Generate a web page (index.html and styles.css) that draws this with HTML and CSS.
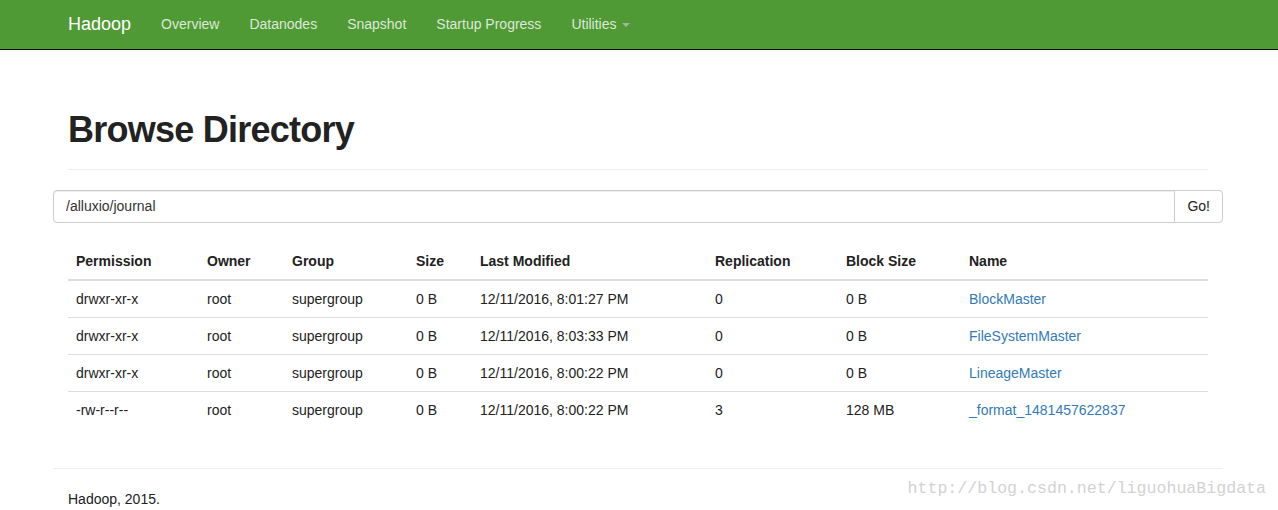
FILE: index.html
```html
<!DOCTYPE html>
<html>
<head>
<meta charset="utf-8">
<title>Browsing HDFS</title>
<link rel="stylesheet" href="styles.css">
</head>
<body>
<header class="navbar">
  <div class="container nav-inner">
    <a class="brand" href="#">Hadoop</a>
    <ul class="nav">
      <li><a href="#">Overview</a></li>
      <li><a href="#">Datanodes</a></li>
      <li><a href="#">Snapshot</a></li>
      <li><a href="#">Startup Progress</a></li>
      <li><a href="#">Utilities <span class="caret"></span></a></li>
    </ul>
  </div>
</header>

<main class="container main">
  <div class="page-header">
    <h1>Browse Directory</h1>
  </div>

  <div class="row">
    <form class="input-group">
      <input class="form-control" type="text" value="/alluxio/journal">
      <button class="btn" type="button">Go!</button>
    </form>
  </div>

  <table class="table">
    <colgroup>
      <col class="c-perm"><col class="c-owner"><col class="c-group"><col class="c-size">
      <col class="c-mod"><col class="c-rep"><col class="c-bsize"><col class="c-name">
    </colgroup>
    <thead>
      <tr>
        <th>Permission</th><th>Owner</th><th>Group</th><th>Size</th>
        <th>Last Modified</th><th>Replication</th><th>Block Size</th><th>Name</th>
      </tr>
    </thead>
    <tbody>
      <tr>
        <td>drwxr-xr-x</td><td>root</td><td>supergroup</td><td>0 B</td>
        <td>12/11/2016, 8:01:27 PM</td><td>0</td><td>0 B</td><td><a href="#">BlockMaster</a></td>
      </tr>
      <tr>
        <td>drwxr-xr-x</td><td>root</td><td>supergroup</td><td>0 B</td>
        <td>12/11/2016, 8:03:33 PM</td><td>0</td><td>0 B</td><td><a href="#">FileSystemMaster</a></td>
      </tr>
      <tr>
        <td>drwxr-xr-x</td><td>root</td><td>supergroup</td><td>0 B</td>
        <td>12/11/2016, 8:00:22 PM</td><td>0</td><td>0 B</td><td><a href="#">LineageMaster</a></td>
      </tr>
      <tr>
        <td>-rw-r--r--</td><td>root</td><td>supergroup</td><td>0 B</td>
        <td>12/11/2016, 8:00:22 PM</td><td>3</td><td>128 MB</td><td><a href="#">_format_1481457622837</a></td>
      </tr>
    </tbody>
  </table>

  <div class="row">
    <hr class="footer-rule">
    <footer class="footer">Hadoop, 2015.</footer>
  </div>
</main>

<div class="watermark">http://blog.csdn.net/liguohuaBigdata</div>
</body>
</html>
```

FILE: styles.css
```css
* { box-sizing: border-box; }

html, body {
  margin: 0;
  padding: 0;
}

body {
  font-family: "Liberation Sans", Arial, Helvetica, sans-serif;
  font-size: 14px;
  line-height: 20px;
  color: #333;
  background: #fff;
  position: relative;
  min-height: 510px;
}

a { color: #337ab7; text-decoration: none; }

.container {
  width: 1170px;
  margin-left: calc(50% - 586px);
  padding: 0 15px;
}

.main {
  padding-top: 20px;
}

.row {
  margin: 0 -15px;
}

/* Navbar */
.navbar {
  height: 50px;
  background: #4f9a34;
  border-bottom: 1px solid #0a0a0a;
}

.nav-inner {
  display: flex;
  align-items: center;
}

.brand {
  margin-left: -15px;
  padding: 15px;
  font-size: 18px;
  line-height: 19px;
  color: #fff;
}

.nav {
  display: flex;
  list-style: none;
  margin: 0;
  padding: 0;
}

.nav a {
  display: block;
  padding: 15px;
  line-height: 19px;
  color: #dde8d8;
}

.caret {
  display: inline-block;
  width: 0;
  height: 0;
  margin-left: 2px;
  vertical-align: middle;
  border-top: 4px solid #9fb898;
  border-left: 4px solid transparent;
  border-right: 4px solid transparent;
}

/* Header */
.page-header {
  margin: 40px 0 20px;
  padding-bottom: 9px;
  border-bottom: 1px solid #eee;
}

h1 {
  margin: 0 0 10px;
  font-size: 36px;
  line-height: 39.6px;
  font-weight: bold;
  color: #222;
  letter-spacing: -0.75px;
}

/* Input group */
.input-group {
  display: flex;
  margin: 0;
}

.form-control {
  flex: 1;
  height: 33px;
  padding: 6px 12px;
  font-family: inherit;
  font-size: 14px;
  color: #333;
  border: 1px solid #ccc;
  border-radius: 4px 0 0 4px;
  box-shadow: inset 0 1px 1px rgba(0,0,0,.075);
  outline: none;
}

.btn {
  height: 33px;
  margin-left: -1px;
  padding: 6px 12px;
  font-family: inherit;
  font-size: 14px;
  color: #222;
  background: #fff;
  border: 1px solid #ccc;
  border-radius: 0 4px 4px 0;
}

/* Table */
.table {
  width: 100%;
  margin-top: 20px;
  margin-bottom: 20px;
  border-collapse: collapse;
  table-layout: fixed;
}

.c-perm { width: 131px; }
.c-owner { width: 85px; }
.c-group { width: 124px; }
.c-size { width: 64px; }
.c-mod { width: 235px; }
.c-rep { width: 131px; }
.c-bsize { width: 123px; }
.c-name { width: 247px; }

.table th,
.table td {
  padding: 8px;
  text-align: left;
  vertical-align: top;
  white-space: nowrap;
}

.table th {
  font-weight: bold;
  color: #222;
  border-bottom: 2px solid #ddd;
}

.table td {
  color: #222;
  border-top: 1px solid #ddd;
}

/* Footer */
.footer-rule {
  margin: 40px 0 20px;
  border: 0;
  border-top: 1px solid #eee;
}

.footer {
  padding: 0 15px;
  color: #222;
}

.watermark {
  position: absolute;
  top: 480px;
  right: 12px;
  font-family: "Liberation Mono", "DejaVu Sans Mono", monospace;
  font-size: 16.6px;
  line-height: 17px;
  color: #d2d2d2;
  white-space: nowrap;
}
```
